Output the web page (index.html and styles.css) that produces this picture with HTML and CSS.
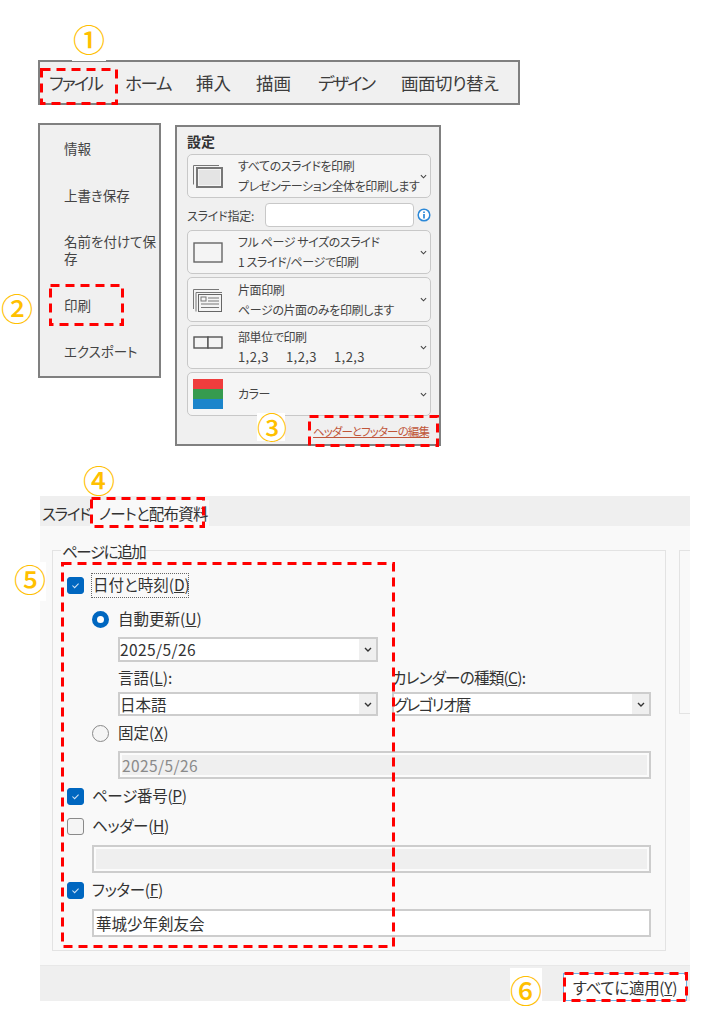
FILE: index.html
```html
<!DOCTYPE html>
<html lang="ja">
<head>
<meta charset="utf-8">
<title>ヘッダーとフッターの設定手順</title>
<link rel="stylesheet" href="styles.css">
</head>
<body>
<div class="page">
  <nav class="ribbon">
    <span class="tight">ファイル</span><span class="tight-s">ホーム</span><span>挿入</span><span>描画</span><span class="tight">デザイン</span><span class="tight-xs">画面切り替え</span>
  </nav>

  <div class="backstage">
    <ul class="menu">
      <li>情報</li>
      <li>上書き保存</li>
      <li>名前を付けて保存</li>
      <li>印刷</li>
      <li>エクスポート</li>
    </ul>

    <section class="settings">
      <h2 class="settings-title">設定</h2>

      <div class="card">
        <svg class="card-icon" viewBox="0 0 30 24"><path d="M0.5 20.5V1.5H26" fill="none" stroke="#777" stroke-width="1"/><rect x="4" y="4" width="25" height="19" fill="#f4f4f4" stroke="#777" stroke-width="2"/><rect x="6" y="6" width="21" height="15" fill="#e4e4e4"/></svg>
        <div class="card-text"><span>すべてのスライドを印刷</span><span>プレゼンテーション全体を印刷します</span></div>
        <svg class="chev" viewBox="0 0 8 5"><path d="M1 1l3 3 3-3" fill="none" stroke="#444" stroke-width="1.2"/></svg>
      </div>

      <div class="range">
        <label>スライド指定:</label>
        <span class="range-input"></span>
        <svg class="info" viewBox="0 0 14 14"><circle cx="7" cy="7" r="5.8" fill="#fff" stroke="#2b88d8" stroke-width="1.5"/><path d="M7 6v4.4M7 3.4v1.5" stroke="#2b88d8" stroke-width="1.7"/></svg>
      </div>

      <div class="card">
        <svg class="card-icon" viewBox="0 0 30 24"><rect x="1" y="3" width="28" height="19" fill="#f4f4f4" stroke="#666" stroke-width="1.4"/></svg>
        <div class="card-text"><span>フル ページ サイズのスライド</span><span>1 スライド/ページで印刷</span></div>
        <svg class="chev" viewBox="0 0 8 5"><path d="M1 1l3 3 3-3" fill="none" stroke="#444" stroke-width="1.2"/></svg>
      </div>

      <div class="card tall">
        <svg class="card-icon" viewBox="0 0 30 24"><path d="M0.5 21V1.5H26" fill="none" stroke="#777"/><path d="M3 23.500V4.500H29" fill="none" stroke="#777"/><rect x="5.500" y="6.500" width="23" height="17" fill="#f4f4f4" stroke="#666"/><rect x="8" y="9" width="5" height="4" fill="none" stroke="#777"/><path d="M15 10h11M15 13h11M8 16h18M8 19.500h18" stroke="#777"/></svg>
        <div class="card-text"><span>片面印刷</span><span>ページの片面のみを印刷します</span></div>
        <svg class="chev" viewBox="0 0 8 5"><path d="M1 1l3 3 3-3" fill="none" stroke="#444" stroke-width="1.2"/></svg>
      </div>

      <div class="card">
        <svg class="card-icon" viewBox="0 0 30 24"><rect x="1" y="2" width="14" height="11" fill="#f4f4f4" stroke="#555" stroke-width="1.4"/><rect x="15" y="2" width="14" height="11" fill="#f4f4f4" stroke="#555" stroke-width="1.4"/></svg>
        <div class="card-text"><span>部単位で印刷</span><span class="collate"><i>1,2,3</i><i>1,2,3</i><i>1,2,3</i></span></div>
        <svg class="chev" viewBox="0 0 8 5"><path d="M1 1l3 3 3-3" fill="none" stroke="#444" stroke-width="1.2"/></svg>
      </div>

      <div class="card">
        <div class="swatch"><b class="red"></b><b class="green"></b><b class="blue"></b></div>
        <div class="card-text"><span>カラー</span></div>
        <svg class="chev" viewBox="0 0 8 5"><path d="M1 1l3 3 3-3" fill="none" stroke="#444" stroke-width="1.2"/></svg>
      </div>

      <a class="edit-link">ヘッダーとフッターの編集</a>
    </section>
  </div>

  <section class="dialog">
    <div class="tabs">
      <span class="tab">スライド</span>
      <span class="tab active">ノートと配布資料</span>
    </div>
    <div class="dialog-body">
      <div class="group">
        <span class="legend">ページに追加</span>

        <div class="row first">
          <span class="check on"><svg viewBox="0 0 17 17"><path d="M5 8.500l2.500 2.500 4.500-4.500" fill="none" stroke="#cfe2f5" stroke-width="1.2"/></svg></span>
          <span class="focus">日付と時刻(<u>D</u>)</span>
        </div>
        <div class="row lvl1 m9">
          <span class="radio on"></span><span class="label">自動更新(<u>U</u>)</span>
        </div>
        <div class="select lvl2 short m6"><span class="date">2025/5/26</span><em><svg viewBox="0 0 8 5"><path d="M1 1l3 3 3-3" fill="none" stroke="#333" stroke-width="1.4"/></svg></em></div>
        <div class="pair lvl2 m6">
          <div class="field">
            <label>言語(<u>L</u>):</label>
            <div class="select"><span>日本語</span><em><svg viewBox="0 0 8 5"><path d="M1 1l3 3 3-3" fill="none" stroke="#333" stroke-width="1.4"/></svg></em></div>
          </div>
          <div class="field">
            <label class="cal">カレンダーの種類(<u>C</u>):</label>
            <div class="select"><span class="cal-value">グレゴリオ暦</span><em><svg viewBox="0 0 8 5"><path d="M1 1l3 3 3-3" fill="none" stroke="#333" stroke-width="1.4"/></svg></em></div>
          </div>
        </div>
        <div class="row lvl1 m5">
          <span class="radio"></span><span class="label">固定(<u>X</u>)</span>
        </div>
        <div class="input off lvl2 m6"><span class="date">2025/5/26</span></div>
        <div class="row m5">
          <span class="check on"><svg viewBox="0 0 17 17"><path d="M5 8.500l2.500 2.500 4.500-4.500" fill="none" stroke="#cfe2f5" stroke-width="1.2"/></svg></span>
          <span class="label kana">ページ番号(<u>P</u>)</span>
        </div>
        <div class="row m6">
          <span class="check"></span>
          <span class="label kana">ヘッダー(<u>H</u>)</span>
        </div>
        <div class="input off lvl1 m7"></div>
        <div class="row m5">
          <span class="check on"><svg viewBox="0 0 17 17"><path d="M5 8.500l2.500 2.500 4.500-4.500" fill="none" stroke="#cfe2f5" stroke-width="1.2"/></svg></span>
          <span class="label kana">フッター(<u>F</u>)</span>
        </div>
        <div class="input lvl1 m7">華城少年剣友会</div>
      </div>
      <div class="side-group"></div>
    </div>
    <div class="dialog-foot">
      <button class="apply">すべてに適用(<u>Y</u>)</button>
    </div>
  </section>

  <svg class="marks" width="710" height="1024" viewBox="0 0 710 1024">
    <rect x="41.500" y="69.500" width="75" height="34"/>
    <rect x="50.500" y="285.500" width="72" height="39"/>
    <rect x="309.500" y="416.500" width="128" height="29"/>
    <rect x="91.500" y="498.500" width="112" height="28"/>
    <rect x="62.500" y="563.500" width="331" height="383"/>
    <rect x="564.500" y="973.500" width="122" height="27"/>
  </svg>

  <span class="num n1">①</span>
  <span class="num n2">②</span>
  <span class="num n3">③</span>
  <span class="num n4">④</span>
  <span class="num n5">⑤</span>
  <span class="num n6">⑥</span>
</div>
</body>
</html>
```

FILE: styles.css
```css
* { box-sizing: border-box; }
html, body { margin: 0; background: #fff; }
body {
  font-family: "Noto Sans CJK JP", "Noto Sans", sans-serif;
  font-feature-settings: "palt";
  color: #333;
}
.page {
  position: relative;
  width: 710px;
  height: 1024px;
  padding: 60px 0 0 38px;
  overflow: hidden;
}

/* ribbon */
.ribbon {
  width: 482px;
  height: 45px;
  display: grid;
  grid-template-columns: 76px 71px 60px 62px 83px auto;
  align-items: center;
  padding: 0 0 0 9px;
  background: #f0f0f0;
  border: 2px solid #808080;
  font-size: 17.500px;
  line-height: 20px;
  color: #3c3c3c;
  white-space: nowrap;
}
.tight { letter-spacing: -2px; }
.tight-s { letter-spacing: -1.300px; }
.tight-xs { letter-spacing: -0.500px; }

/* backstage */
.backstage {
  display: flex;
  align-items: flex-start;
  gap: 14px;
  margin-top: 18px;
}
.menu {
  list-style: none;
  margin: 0;
  width: 123px;
  height: 255px;
  padding: 15px 0 0 24px;
  display: flex;
  flex-direction: column;
  gap: 29.500px;
  background: #f0f0f0;
  border: 2px solid #808080;
  font-size: 13.500px;
  line-height: 17px;
  color: #444;
}
.settings {
  width: 266px;
  height: 321px;
  margin-top: 2px;
  padding: 4px 8px 0 10px;
  background: #f0f0f0;
  border: 2px solid #808080;
  display: flex;
  flex-direction: column;
  gap: 3px;
}
.settings-title {
  margin: 0;
  font-size: 14px;
  line-height: 20px;
  font-weight: 700;
  color: #333;
}
.card {
  height: 44px;
  flex: none;
  display: flex;
  align-items: center;
  padding: 0 3px 0 5px;
  background: #f5f5f5;
  border: 1px solid #c8c8c8;
  border-radius: 5px;
}
.card.tall { height: 45px; }
.card-icon { width: 30px; height: 24px; flex: none; }
.card-text {
  flex: 1;
  min-width: 0;
  margin-left: 15px;
  display: flex;
  flex-direction: column;
  gap: 4px;
  font-size: 12px;
  letter-spacing: -0.400px;
  line-height: 16px;
  color: #444;
  white-space: nowrap;
}
.collate { display: flex; font-size: 13px; letter-spacing: 0.400px; }
.collate i { font-style: normal; width: 48px; }
.chev { width: 7px; height: 5px; flex: none; }
.swatch { width: 30px; display: flex; flex-direction: column; flex: none; }
.swatch b { height: 10px; }
.swatch .red { background: #ef3d3d; }
.swatch .green { background: #369b4f; }
.swatch .blue { background: #1c85cb; }
.range {
  display: flex;
  align-items: center;
  height: 24px;
  font-size: 12px;
  color: #444;
  margin-top: 2px;
}
.range label { width: 78px; flex: none; letter-spacing: -0.200px; }
.range-input {
  width: 150px;
  height: 24px;
  background: #fff;
  border: 1px solid #c8c8c8;
  border-radius: 4px;
}
.info { width: 14px; height: 14px; margin-left: 3px; flex: none; }
.edit-link {
  align-self: flex-end;
  margin: 4px 2px 0 0;
  font-size: 11.500px;
  letter-spacing: -0.900px;
  line-height: 17px;
  color: #c0563a;
  text-decoration: underline;
}

/* dialog */
.dialog {
  width: 650px;
  margin: 50px 0 0 2px;
  font-size: 15.500px;
  line-height: 20px;
  color: #333;
}
.tabs {
  height: 30px;
  display: flex;
  align-items: flex-end;
  background: #efefef;
}
.tab {
  height: 26px;
  padding: 3px 0 0 2px;
  width: 50px;
  white-space: nowrap;
  letter-spacing: -1.300px;
}
.tab.active {
  width: 119px;
  padding-left: 9px;
  background: #f9f9f9;
  letter-spacing: -0.800px;
}
.dialog-body {
  display: flex;
  height: 440px;
  padding: 24px 0 0 12px;
  gap: 13px;
  background: #f9f9f9;
  border-bottom: 1px solid #e8e8e8;
}
.group {
  position: relative;
  width: 614px;
  height: 401px;
  padding: 22px 14px 0;
  border: 1px solid #e3e3e3;
  flex: none;
}
.legend {
  position: absolute;
  left: 8px;
  top: -10px;
  padding: 0 1px;
  background: #f9f9f9;
  letter-spacing: -1.400px;
}
.side-group {
  flex: 1;
  height: 164px;
  border: 1px solid #e3e3e3;
  border-right: 0;
}
.row {
  display: flex;
  align-items: center;
  height: 24px;
  gap: 9px;
}
.row.first { height: 25px; gap: 7px; }
.label { margin-top: -2px; }
.kana { margin-left: -1px; letter-spacing: -0.300px; }
.lvl1 { margin-left: 25px; }
.lvl2 { margin-left: 51px; }
.m5 { margin-top: 5px; }
.m6 { margin-top: 6px; }
.m7 { margin-top: 7px; }
.m9 { margin-top: 9px; }
.check {
  width: 17px;
  height: 17px;
  flex: none;
  background: #f5f5f5;
  border: 1px solid #8a8a8a;
  border-radius: 3px;
}
.check.on { background: #0067c0; border-color: #0067c0; }
.check svg { display: block; width: 15px; height: 15px; }
.focus {
  height: 25px;
  padding: 0 0 0 1px;
  width: 98px;
  border: 1px dotted #666;
  white-space: nowrap;
}
.radio {
  width: 17px;
  height: 17px;
  flex: none;
  border: 1px solid #8a8a8a;
  border-radius: 50%;
  background: #f5f5f5;
}
.radio.on { border: 5px solid #0067c0; background: #fff; }
.select {
  height: 24px;
  display: flex;
  justify-content: space-between;
  background: #fff;
  border: 2px solid #cdcdcd;
  line-height: 20px;
}
.select em {
  width: 17px;
  background: #efefef;
  display: flex;
  align-items: center;
  justify-content: center;
}
.select svg { width: 8px; height: 5px; }
.short { width: 260px; height: 25px; }
.date { letter-spacing: 0.400px; }
.pair {
  display: grid;
  grid-template-columns: 260px 259px;
  gap: 14px;
}
.field label { display: block; height: 20px; margin: -1px 0 5px; white-space: nowrap; }
.field .cal { letter-spacing: -0.700px; }
.cal-value { letter-spacing: -1.500px; }
.input {
  height: 28px;
  padding: 2px;
  background: #fff;
  border: 2px solid #cdcdcd;
}
.input.off {
  background: #efefef;
  box-shadow: inset 0 0 0 2px #fbfbfb;
  color: #8a8a8a;
}
.dialog-foot {
  height: 35px;
  display: flex;
  justify-content: flex-end;
  align-items: flex-end;
  padding-right: 3px;
  background: #efefef;
}
.apply {
  width: 124px;
  height: 28px;
  padding: 0;
  background: #fff;
  border: 1px solid #6db3e8;
  font: inherit;
  color: #333;
  letter-spacing: -0.300px;
}

/* annotations */
.marks {
  position: absolute;
  left: 0;
  top: 0;
  pointer-events: none;
}
.marks rect {
  fill: none;
  stroke: #ff0000;
  stroke-width: 3;
  stroke-dasharray: 9 6;
}
.num {
  position: absolute;
  width: 34px;
  height: 39px;
  font-size: 32px;
  font-weight: 500;
  line-height: 32px;
  text-align: center;
  color: #ffc000;
  background: #fff;
  font-feature-settings: normal;
}
.n1 { left: 72px; top: 22px; }
.n2 { left: 0; top: 291px; background: transparent; }
.n3 { left: 257px; top: 413px; width: 28px; height: 28px; font-size: 30px; line-height: 27px; }
.n4 { left: 82px; top: 463px; background: transparent; }
.n5 { left: 14px; top: 562px; width: 32px; }
.n6 { left: 510px; top: 968px; width: 32px; height: 38px; line-height: 42px; }
```
